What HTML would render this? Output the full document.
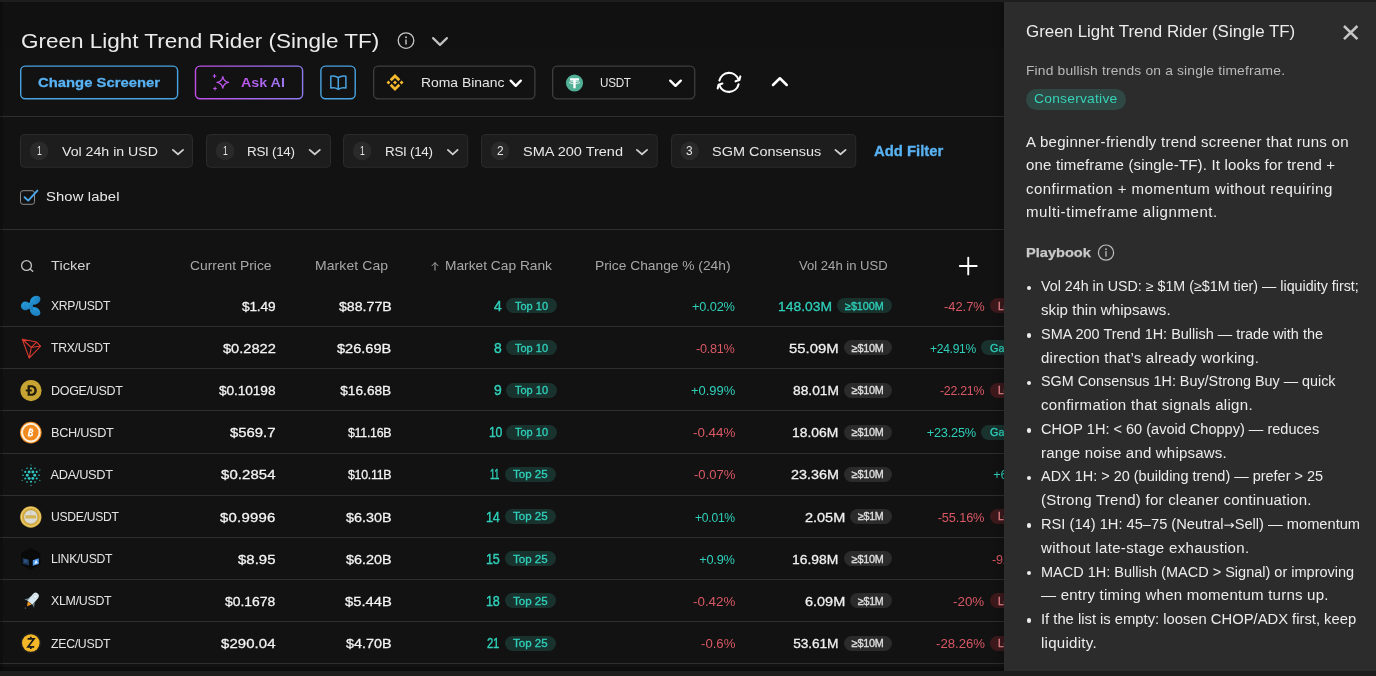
<!DOCTYPE html>
<html lang="en"><head><meta charset="utf-8"><title>Green Light Trend Rider (Single TF)</title>
<style>
html,body{margin:0;padding:0;background:#121212;}
body{width:1376px;height:676px;overflow:hidden;position:relative;font-family:"Liberation Sans", sans-serif;}
.layer{position:absolute;left:0;top:0;width:1376px;height:676px;overflow:hidden;will-change:transform}
ul,li,p,h3,header,nav{margin:0;padding:0;list-style:none;font:inherit;display:block}
.t{position:absolute;line-height:1;white-space:pre;transform-origin:0 0}
.ov{position:absolute;left:0;top:0}
.hl{position:absolute;left:0;width:1004px;height:1px;background:#2e2e2e}
.chip{position:absolute;border-radius:8px}
.dot{position:absolute;width:4.7px;height:4.7px;border-radius:50%;background:#ededed}
.topbar{position:absolute;left:0;top:0;width:1376px;height:2px;background:#1e1e1e}
.botbar{position:absolute;left:0;top:671px;width:1376px;height:5px;background:#1d1d1d}
.botdark{position:absolute;left:0;top:667px;width:1004px;height:4px;background:#0d0d0d}
.leftdark{position:absolute;left:0;top:2px;width:3px;height:669px;background:rgba(0,0,0,0.2)}
.topshade{position:absolute;left:0;top:2px;width:1004px;height:46px;background:rgba(0,0,0,0.05)}
.pbg{position:absolute;left:1004px;top:2px;width:372px;height:669px;background:#2c2c2c;box-shadow:-3px 0 8px rgba(0,0,0,0.22)}
.cons{position:absolute;left:1025.5px;top:88.8px;width:100px;height:21.3px;border-radius:11px;background:#2f4844}
</style></head>
<body>
<main class="layer main">
<div class="topshade"></div>
<div class="hl" style="top:116px"></div>
<div class="hl" style="top:229px"></div>
<svg class="ov" width="1376" height="676" viewBox="0 0 1376 676"><defs><linearGradient id="pg" x1="195" x2="303" y1="0" y2="0" gradientUnits="userSpaceOnUse"><stop offset="0" stop-color="#c24ee6"/><stop offset="1" stop-color="#8f7df0"/></linearGradient></defs><rect x="20.70" y="66.10" width="156.90" height="32.70" rx="4.5" fill="none" stroke="#4aa3df" stroke-width="1.4"/>
<rect x="195.50" y="66.10" width="107.10" height="32.70" rx="4.5" fill="none" stroke="url(#pg)" stroke-width="1.4"/>
<rect x="320.90" y="66.10" width="34.30" height="32.70" rx="4.5" fill="none" stroke="#4aa3df" stroke-width="1.4"/>
<rect x="373.65" y="66.05" width="161.20" height="32.80" rx="4.5" fill="none" stroke="#3e3e3e" stroke-width="1.3"/>
<rect x="552.65" y="66.05" width="142.10" height="32.80" rx="4.5" fill="none" stroke="#3e3e3e" stroke-width="1.3"/>
<rect x="20.50" y="134.50" width="172.00" height="32.80" rx="4" fill="#1d1d1d" stroke="#2b2b2b" stroke-width="1"/>
<circle cx="39.1" cy="150.9" r="9.3" fill="#2a2a2a"/>
<rect x="206.50" y="134.50" width="124.00" height="32.80" rx="4" fill="#1d1d1d" stroke="#2b2b2b" stroke-width="1"/>
<circle cx="225.1" cy="150.9" r="9.3" fill="#2a2a2a"/>
<rect x="343.50" y="134.50" width="124.25" height="32.80" rx="4" fill="#1d1d1d" stroke="#2b2b2b" stroke-width="1"/>
<circle cx="362.1" cy="150.9" r="9.3" fill="#2a2a2a"/>
<rect x="481.50" y="134.50" width="175.75" height="32.80" rx="4" fill="#1d1d1d" stroke="#2b2b2b" stroke-width="1"/>
<circle cx="500.1" cy="150.9" r="9.3" fill="#2a2a2a"/>
<rect x="671.50" y="134.50" width="184.25" height="32.80" rx="4" fill="#1d1d1d" stroke="#2b2b2b" stroke-width="1"/>
<circle cx="689.6" cy="150.9" r="9.3" fill="#2a2a2a"/>
<rect x="20.50" y="190.70" width="14.00" height="13.60" rx="2.5" fill="none" stroke="#8a8a8a" stroke-width="1"/></svg>
<div class="chip" style="left:506.25px;top:298.30px;width:50.25px;height:15px;background:#19322e"></div>
<div class="chip" style="left:836.75px;top:298.30px;width:55.25px;height:15px;background:#19322e"></div>
<div class="chip" style="left:989.5px;top:298.30px;width:50px;height:15px;background:#3d191c"></div>
<div class="hl" style="top:326.10px"></div>
<div class="chip" style="left:506.25px;top:340.47px;width:50.25px;height:15px;background:#19322e"></div>
<div class="chip" style="left:843.75px;top:340.47px;width:48.25px;height:15px;background:#2b2b2b"></div>
<div class="chip" style="left:981.25px;top:340.47px;width:50px;height:15px;background:#19322e"></div>
<div class="hl" style="top:368.27px"></div>
<div class="chip" style="left:506.25px;top:382.64px;width:50.25px;height:15px;background:#19322e"></div>
<div class="chip" style="left:843.75px;top:382.64px;width:48.25px;height:15px;background:#2b2b2b"></div>
<div class="chip" style="left:989.5px;top:382.64px;width:50px;height:15px;background:#3d191c"></div>
<div class="hl" style="top:410.44px"></div>
<div class="chip" style="left:506.25px;top:424.81px;width:50.25px;height:15px;background:#19322e"></div>
<div class="chip" style="left:843.75px;top:424.81px;width:48.25px;height:15px;background:#2b2b2b"></div>
<div class="chip" style="left:981.25px;top:424.81px;width:50px;height:15px;background:#19322e"></div>
<div class="hl" style="top:452.61px"></div>
<div class="chip" style="left:504.6px;top:466.98px;width:51.40px;height:15px;background:#19322e"></div>
<div class="chip" style="left:843.75px;top:466.98px;width:48.25px;height:15px;background:#2b2b2b"></div>
<div class="hl" style="top:494.78px"></div>
<div class="chip" style="left:504.6px;top:509.15px;width:51.40px;height:15px;background:#19322e"></div>
<div class="chip" style="left:850px;top:509.15px;width:42.00px;height:15px;background:#2b2b2b"></div>
<div class="chip" style="left:989.5px;top:509.15px;width:50px;height:15px;background:#3d191c"></div>
<div class="hl" style="top:536.95px"></div>
<div class="chip" style="left:504.6px;top:551.32px;width:51.40px;height:15px;background:#19322e"></div>
<div class="chip" style="left:843.75px;top:551.32px;width:48.25px;height:15px;background:#2b2b2b"></div>
<div class="hl" style="top:579.12px"></div>
<div class="chip" style="left:504.6px;top:593.49px;width:51.40px;height:15px;background:#19322e"></div>
<div class="chip" style="left:850px;top:593.49px;width:42.00px;height:15px;background:#2b2b2b"></div>
<div class="chip" style="left:989.5px;top:593.49px;width:50px;height:15px;background:#3d191c"></div>
<div class="hl" style="top:621.29px"></div>
<div class="chip" style="left:504.6px;top:635.66px;width:51.40px;height:15px;background:#19322e"></div>
<div class="chip" style="left:843.75px;top:635.66px;width:48.25px;height:15px;background:#2b2b2b"></div>
<div class="chip" style="left:989.5px;top:635.66px;width:50px;height:15px;background:#3d191c"></div>
<div class="hl" style="top:663.46px"></div>
<svg class="ov" width="1376" height="676" viewBox="0 0 1376 676"><circle cx="406" cy="40.6" r="7.8" fill="none" stroke="#c9c9c9" stroke-width="1.3"/><circle cx="406" cy="37.2" r="0.95" fill="#c9c9c9"/><path d="M406 39.9V44" stroke="#c9c9c9" stroke-width="1.4" stroke-linecap="round"/>
<path d="M433.10 38.10 L440.00 44.90 L446.90 38.10" fill="none" stroke="#bfbfbf" stroke-width="2.2" stroke-linecap="round" stroke-linejoin="round"/>
<path d="M222.8 76.6 C223.4 80.2 225 81.8 228.6 82.4 C225 83 223.4 84.6 222.8 88.2 C222.2 84.6 220.6 83 217 82.4 C220.6 81.8 222.2 80.2 222.8 76.6Z" fill="none" stroke="#bb55ec" stroke-width="1.3" stroke-linejoin="round"/>
<path d="M214.5 74.6V77.4M213.1 76H215.9M215 87.1V89.9M213.6 88.5H216.4" stroke="#bb55ec" stroke-width="1.1" stroke-linecap="round"/>
<path d="M338.3 77.6C336 76 333 75.7 330.8 76.2V88C333 87.5 336 87.8 338.3 89.3C340.6 87.8 343.6 87.5 345.9 88V76.2C343.6 75.7 340.6 76 338.3 77.6ZM338.3 77.6V89.3" fill="none" stroke="#4aa3df" stroke-width="1.5" stroke-linejoin="round"/>
<g transform="translate(386.5,74) scale(0.1355)" fill="#f3ba2f"><polygon points="62.76,0 101.65,38.9 87.35,53.2 62.76,28.6 38.17,53.2 23.86,38.9"/><polygon points="62.76,125.5 101.65,86.6 87.35,72.3 62.76,96.9 38.17,72.3 23.86,86.6"/><polygon points="0,62.76 14.3,48.45 28.6,62.76 14.3,77.07"/><polygon points="96.9,62.76 111.2,48.45 125.5,62.76 111.2,77.07"/><polygon points="62.76,48.23 77.28,62.76 62.76,77.28 48.23,62.76"/></g>
<path d="M510.70 80.70 L515.75 85.80 L520.80 80.70" fill="none" stroke="#ffffff" stroke-width="2.4" stroke-linecap="round" stroke-linejoin="round"/>
<circle cx="574.5" cy="83" r="8.6" fill="#50af95"/><path d="M570 78.3H579V80.6H575.7V88.3H573.3V80.6H570Z" fill="#fff"/><ellipse cx="574.5" cy="82.6" rx="5.2" ry="1.1" fill="none" stroke="#fff" stroke-width="0.7"/>
<path d="M670.20 80.70 L675.50 85.80 L680.80 80.70" fill="none" stroke="#ffffff" stroke-width="2.4" stroke-linecap="round" stroke-linejoin="round"/>
<g fill="none" stroke="#fff" stroke-width="2.1" stroke-linecap="round" stroke-linejoin="round"><path d="M719.4 80.6A10 10 0 0 1 738.5 79.4"/><path d="M735.6 81.3L739.4 80L740.3 76.4"/><path d="M738.6 84.2A10 10 0 0 1 719.5 85.4"/><path d="M722.4 83.5L718.6 84.8L717.7 88.4"/></g>
<path d="M773.00 85.00 L779.88 78.25 L786.75 85.00" fill="none" stroke="#ffffff" stroke-width="2.5" stroke-linecap="round" stroke-linejoin="round"/>
<path d="M172.90 149.90 L178.00 154.30 L183.10 149.90" fill="none" stroke="#cfcfcf" stroke-width="1.8" stroke-linecap="round" stroke-linejoin="round"/>
<path d="M309.65 149.90 L314.75 154.30 L319.85 149.90" fill="none" stroke="#cfcfcf" stroke-width="1.8" stroke-linecap="round" stroke-linejoin="round"/>
<path d="M447.90 149.90 L452.75 154.30 L457.60 149.90" fill="none" stroke="#cfcfcf" stroke-width="1.8" stroke-linecap="round" stroke-linejoin="round"/>
<path d="M636.90 149.90 L642.00 154.30 L647.10 149.90" fill="none" stroke="#cfcfcf" stroke-width="1.8" stroke-linecap="round" stroke-linejoin="round"/>
<path d="M835.40 149.90 L840.50 154.30 L845.60 149.90" fill="none" stroke="#cfcfcf" stroke-width="1.8" stroke-linecap="round" stroke-linejoin="round"/>
<path d="M24.6 197.2L28.2 200.6L37.4 190.6" fill="none" stroke="#4aa8ea" stroke-width="1.9" stroke-linecap="round" stroke-linejoin="round"/>
<circle cx="26.5" cy="265.5" r="4.9" fill="none" stroke="#c2c2c2" stroke-width="1.3"/><path d="M30.3 269.3L32.7 271.3" stroke="#c2c2c2" stroke-width="1.4" stroke-linecap="round"/>
<path d="M435 270.2V262.8M432 265.7L435 262.7L438 265.7" fill="none" stroke="#a8a8a8" stroke-width="1" stroke-linecap="round" stroke-linejoin="round"/>
<path d="M959.8 266H976.7M968.25 257.6V274.4" stroke="#fff" stroke-width="1.9" stroke-linecap="round"/>
<defs><linearGradient id="xg" x1="0" y1="0" x2="1" y2="1"><stop offset="0" stop-color="#27a2e0"/><stop offset="1" stop-color="#1b75b4"/></linearGradient></defs><g fill="url(#xg)"><circle cx="25.4" cy="305.9" r="4.4"/><ellipse cx="35.2" cy="300.29999999999995" rx="5.6" ry="4.1" transform="rotate(-32 35.2 300.29999999999995)"/><ellipse cx="35.2" cy="311.5" rx="5.6" ry="4.1" transform="rotate(32 35.2 311.5)"/><path d="M26 303.7L33 301.29999999999995L33 310.5L26 308.09999999999997Z"/></g>
<path d="M22.3 339.27L36.6 342.07L40.6 346.07L29.2 358.07ZM22.3 339.27L31.3 347.46999999999997L29.2 358.07M31.3 347.46999999999997L36.6 342.07M31.3 347.46999999999997L40.6 346.07" fill="none" stroke="#d9382c" stroke-width="1.1" stroke-linejoin="round"/>
<circle cx="31" cy="390.54" r="10.6" fill="#c8a533"/><path d="M27.6 385.24H31.2C35 385.24 36.8 387.64 36.8 390.54C36.8 393.44 35 395.84000000000003 31.2 395.84000000000003H27.6ZM29.9 387.24V393.84000000000003H31.1C33.4 393.84000000000003 34.4 392.24 34.4 390.54C34.4 388.84000000000003 33.4 387.24 31.1 387.24Z" fill="#221c0c" fill-rule="evenodd"/><rect x="25.8" y="389.54" width="6" height="1.9" fill="#221c0c"/>
<circle cx="30.8" cy="432.60999999999996" r="10.8" fill="#f08a1e"/><circle cx="30.8" cy="432.60999999999996" r="8.8" fill="none" stroke="#fff1dc" stroke-width="2"/><g transform="translate(30.8 432.60999999999996) rotate(14) scale(0.8) translate(-31.6 -432.40999999999997)"><path d="M28.6 428.01H31.8C33.6 428.01 34.4 429.01 34.4 430.10999999999996C34.4 431.10999999999996 33.8 431.80999999999995 33 432.10999999999996C34.2 432.40999999999997 35 433.30999999999995 35 434.51C35 436.01 33.9 437.01 32 437.01H28.6ZM30.7 429.60999999999996V431.40999999999997H31.5C32.2 431.40999999999997 32.5 431.01 32.5 430.51C32.5 429.90999999999997 32.2 429.60999999999996 31.5 429.60999999999996ZM30.7 433.01V435.40999999999997H31.7C32.5 435.40999999999997 32.9 434.90999999999997 32.9 434.21C32.9 433.51 32.5 433.01 31.7 433.01Z" fill="#fff" fill-rule="evenodd"/><path d="M30.2 426.60999999999996V428.40999999999997M32 426.60999999999996V428.40999999999997M30.2 436.60999999999996V438.40999999999997M32 436.60999999999996V438.40999999999997" stroke="#fff" stroke-width="0.9"/></g>
<g fill="#2fc6c2"><circle cx="34.70" cy="475.18" r="1.45"/><circle cx="32.85" cy="478.38" r="1.45"/><circle cx="29.15" cy="478.38" r="1.45"/><circle cx="27.30" cy="475.18" r="1.45"/><circle cx="29.15" cy="471.98" r="1.45"/><circle cx="32.85" cy="471.98" r="1.45"/><circle cx="36.72" cy="478.48" r="1.05"/><circle cx="31.00" cy="481.78" r="1.05"/><circle cx="25.28" cy="478.48" r="1.05"/><circle cx="25.28" cy="471.88" r="1.05"/><circle cx="31.00" cy="468.58" r="1.05"/><circle cx="36.72" cy="471.88" r="1.05"/><circle cx="39.00" cy="475.18" r="0.8"/><circle cx="35.00" cy="482.11" r="0.8"/><circle cx="27.00" cy="482.11" r="0.8"/><circle cx="23.00" cy="475.18" r="0.8"/><circle cx="27.00" cy="468.25" r="0.8"/><circle cx="35.00" cy="468.25" r="0.8"/><circle cx="39.83" cy="480.28" r="0.6"/><circle cx="31.00" cy="485.38" r="0.6"/><circle cx="22.17" cy="480.28" r="0.6"/><circle cx="22.17" cy="470.08" r="0.6"/><circle cx="31.00" cy="464.98" r="0.6"/><circle cx="39.83" cy="470.08" r="0.6"/></g>
<circle cx="30.8" cy="516.95" r="10.7" fill="#d8b040"/><circle cx="30.8" cy="516.95" r="9.5" fill="none" stroke="#edd27e" stroke-width="1"/><circle cx="30.8" cy="516.95" r="7" fill="#dadad6"/><circle cx="30.8" cy="516.95" r="7.2" fill="none" stroke="#c49a33" stroke-width="0.7"/><rect x="25.4" y="515.25" width="10.8" height="3.3" rx="0.6" fill="#d4b355"/><path d="M30.8 511.25V514.55" stroke="#c9c2a4" stroke-width="0.8"/>
<path d="M30.7 547.92L40.4 553.3199999999999V564.3199999999999L30.7 569.92L21 564.3199999999999V553.3199999999999Z" fill="#090909"/><path d="M22.7 558.12L29 559.7199999999999V565.52L22.7 563.7199999999999Z" fill="#1d3558"/><path d="M24 560.12H27.6M24 561.92H27.6" stroke="#4272ad" stroke-width="0.7"/><path d="M32.8 560.2199999999999L38.8 558.3199999999999V564.02L32.8 565.7199999999999Z" fill="#4f9bf0"/><path d="M34.4 563.92L36 559.7199999999999L37.8 563.12Z" fill="#e4f1ff"/>
<g transform="rotate(40 32.6 599.49)"><path d="M29.3 603.69V595.29A3.3 3.6 0 0 1 35.9 595.29V603.69Z" fill="#d7e8f0"/><path d="M29.3 603.69V598.49" stroke="#b3c9d4" stroke-width="0.8"/><circle cx="32.6" cy="595.69" r="1.7" fill="#fff" stroke="#9db4c0" stroke-width="0.5"/><path d="M29.3 599.89L26.2 604.89L29.3 603.49ZM35.9 599.89L39 604.89L35.9 603.49Z" fill="#6f8792"/><path d="M30.2 603.89H35L32.6 608.29Z" fill="#f19a22"/><circle cx="32.6" cy="610.69" r="0.8" fill="#555"/></g>
<circle cx="30.8" cy="642.96" r="10.5" fill="#1d1d1d"/><circle cx="30.8" cy="642.96" r="8.8" fill="#f4b728"/><path d="M27.6 638.86H34L28 646.86H34.2M30.8 636.86V638.86M30.8 646.86V649.06" fill="none" stroke="#1a1a1a" stroke-width="1.7" stroke-linejoin="miter"/></svg>
<header class="toolbar">
<span class="t" style="left:20.75px;top:31.00px;font-size:20.8px;letter-spacing:0.000px;color:#ebebeb;transform:scaleX(1.0812);">Green Light Trend Rider (Single TF)</span>
<span class="t" style="left:38.00px;top:76.00px;font-size:13.6px;letter-spacing:0.007px;color:#58b2f3;font-weight:700;transform:scaleX(1.0900);-webkit-text-stroke:0.3px #58b2f3;">Change Screener</span>
<span class="t" style="left:241.20px;top:76.00px;font-size:13.6px;letter-spacing:0.000px;color:#b05cf0;font-weight:700;transform:scaleX(1.0499);background:linear-gradient(90deg,#bf55ee,#9b78f0);-webkit-background-clip:text;background-clip:text;color:transparent;">Ask AI</span>
<span class="t" style="left:420.50px;top:77.00px;font-size:12.9px;letter-spacing:0.000px;color:#e6e6e6;transform:scaleX(1.0789);">Roma Binanc</span>
<span class="t" style="left:599.80px;top:77.00px;font-size:12.7px;letter-spacing:-0.300px;color:#e6e6e6;transform:scaleX(0.9213);">USDT</span>
</header>
<nav class="filters">
<span class="t" style="left:62.00px;top:145.00px;font-size:13.6px;letter-spacing:0.000px;color:#e8e8e8;transform:scaleX(1.0412);">Vol 24h in USD</span>
<span class="t" style="left:247.00px;top:145.00px;font-size:13.6px;letter-spacing:-0.300px;color:#e8e8e8;transform:scaleX(0.9892);">RSI (14)</span>
<span class="t" style="left:384.75px;top:145.00px;font-size:13.6px;letter-spacing:-0.300px;color:#e8e8e8;transform:scaleX(0.9892);">RSI (14)</span>
<span class="t" style="left:522.50px;top:145.00px;font-size:13.6px;letter-spacing:0.000px;color:#e8e8e8;transform:scaleX(1.0672);">SMA 200 Trend</span>
<span class="t" style="left:712.00px;top:145.00px;font-size:13.6px;letter-spacing:0.000px;color:#e8e8e8;transform:scaleX(1.0633);">SGM Consensus</span>
<span class="t" style="left:873.75px;top:145.00px;font-size:13.9px;letter-spacing:0.000px;color:#58b2f3;font-weight:700;transform:scaleX(1.0682);-webkit-text-stroke:0.3px #58b2f3;">Add Filter</span>
<span class="t" style="left:46.00px;top:190.00px;font-size:13.6px;letter-spacing:0.102px;color:#e8e8e8;transform:scaleX(1.0900);">Show label</span>
<span class="t" style="left:36.70px;top:145.00px;font-size:12.6px;letter-spacing:-0.300px;color:#e6e6e6;transform:scaleX(0.6842);">1</span>
<span class="t" style="left:222.70px;top:145.00px;font-size:12.6px;letter-spacing:-0.300px;color:#e6e6e6;transform:scaleX(0.6842);">1</span>
<span class="t" style="left:359.70px;top:145.00px;font-size:12.6px;letter-spacing:-0.300px;color:#e6e6e6;transform:scaleX(0.6842);">1</span>
<span class="t" style="left:496.80px;top:145.00px;font-size:12.6px;letter-spacing:-0.300px;color:#e6e6e6;transform:scaleX(0.9408);">2</span>
<span class="t" style="left:686.30px;top:145.00px;font-size:12.6px;letter-spacing:-0.300px;color:#e6e6e6;transform:scaleX(0.9408);">3</span>
</nav>
<div class="thead" role="row">
<span class="t" style="left:51.25px;top:259.00px;font-size:13.6px;letter-spacing:0.000px;color:#d2d2d2;transform:scaleX(1.0753);">Ticker</span>
<span class="t" style="left:190.00px;top:260.00px;font-size:12.8px;letter-spacing:0.000px;color:#a8a8a8;transform:scaleX(1.0810);">Current Price</span>
<span class="t" style="left:314.50px;top:260.00px;font-size:12.8px;letter-spacing:0.092px;color:#a8a8a8;transform:scaleX(1.0900);">Market Cap</span>
<span class="t" style="left:445.00px;top:260.00px;font-size:12.8px;letter-spacing:0.000px;color:#a8a8a8;transform:scaleX(1.0745);">Market Cap Rank</span>
<span class="t" style="left:594.50px;top:260.00px;font-size:12.8px;letter-spacing:0.000px;color:#a8a8a8;transform:scaleX(1.0762);">Price Change % (24h)</span>
<span class="t" style="left:799.25px;top:260.00px;font-size:12.8px;letter-spacing:0.000px;color:#a8a8a8;transform:scaleX(1.0225);">Vol 24h in USD</span>
</div>
<div class="tbody" role="rowgroup">
<div class="tr" role="row">
<span class="t" style="left:50.50px;top:300.00px;font-size:12.8px;letter-spacing:-0.300px;color:#e4e4e4;transform:scaleX(0.9504);">XRP/USDT</span>
<span class="t" style="left:242.00px;top:300.00px;font-size:13.7px;letter-spacing:-0.191px;color:#f4f4f4;-webkit-text-stroke:0.28px #f4f4f4;">$1.49</span>
<span class="t" style="left:338.50px;top:300.00px;font-size:13.7px;letter-spacing:-0.000px;color:#f4f4f4;transform:scaleX(1.0343);-webkit-text-stroke:0.28px #f4f4f4;">$88.77B</span>
<span class="t" style="left:494.25px;top:300.00px;font-size:13.9px;letter-spacing:0.000px;color:#2fd0ba;transform:scaleX(1.0020);-webkit-text-stroke:0.4px #2fd0ba;">4</span>
<span class="t" style="left:515.00px;top:301.00px;font-size:10.8px;letter-spacing:0.000px;color:#2fd0ba;transform:scaleX(1.0178);-webkit-text-stroke:0.32px #2fd0ba;">Top 10</span>
<span class="t" style="left:692.00px;top:301.00px;font-size:12.8px;letter-spacing:-0.153px;color:#2fd0ba;">+0.02%</span>
<span class="t" style="left:777.50px;top:300.00px;font-size:13.7px;letter-spacing:0.000px;color:#2fd0ba;transform:scaleX(1.0135);-webkit-text-stroke:0.3px #2fd0ba;">148.03M</span>
<span class="t" style="left:845.00px;top:301.00px;font-size:10.8px;letter-spacing:-0.041px;color:#2fd0ba;-webkit-text-stroke:0.32px #2fd0ba;">≥$100M</span>
<span class="t" style="left:943.75px;top:301.00px;font-size:12.8px;letter-spacing:-0.000px;color:#d95865;transform:scaleX(1.0050);">-42.7%</span>
<span class="t" style="left:998.00px;top:301.00px;font-size:10.8px;letter-spacing:-0.300px;color:#ee8a90;transform:scaleX(0.9584);-webkit-text-stroke:0.32px #ee8a90;">Loss</span>
</div>
<div class="tr" role="row">
<span class="t" style="left:50.50px;top:342.00px;font-size:12.8px;letter-spacing:-0.300px;color:#e4e4e4;transform:scaleX(0.9564);">TRX/USDT</span>
<span class="t" style="left:222.70px;top:342.00px;font-size:13.7px;letter-spacing:0.000px;color:#f4f4f4;transform:scaleX(1.0670);-webkit-text-stroke:0.28px #f4f4f4;">$0.2822</span>
<span class="t" style="left:337.00px;top:342.00px;font-size:13.7px;letter-spacing:0.000px;color:#f4f4f4;transform:scaleX(1.0637);-webkit-text-stroke:0.28px #f4f4f4;">$26.69B</span>
<span class="t" style="left:494.25px;top:342.00px;font-size:13.9px;letter-spacing:0.000px;color:#2fd0ba;transform:scaleX(1.0020);-webkit-text-stroke:0.4px #2fd0ba;">8</span>
<span class="t" style="left:515.00px;top:343.00px;font-size:10.8px;letter-spacing:0.000px;color:#2fd0ba;transform:scaleX(1.0178);-webkit-text-stroke:0.32px #2fd0ba;">Top 10</span>
<span class="t" style="left:696.25px;top:343.00px;font-size:12.8px;letter-spacing:-0.300px;color:#d95865;transform:scaleX(0.9924);">-0.81%</span>
<span class="t" style="left:789.00px;top:342.00px;font-size:13.7px;letter-spacing:0.000px;color:#f0f0f0;transform:scaleX(1.0842);-webkit-text-stroke:0.3px #f0f0f0;">55.09M</span>
<span class="t" style="left:851.75px;top:343.00px;font-size:10.8px;letter-spacing:-0.234px;color:#e0e0e0;-webkit-text-stroke:0.32px #e0e0e0;">≥$10M</span>
<span class="t" style="left:930.00px;top:343.00px;font-size:12.8px;letter-spacing:-0.300px;color:#2fd0ba;transform:scaleX(0.9421);">+24.91%</span>
<span class="t" style="left:990.00px;top:343.00px;font-size:10.8px;letter-spacing:0.000px;color:#2fd0ba;transform:scaleX(1.0082);-webkit-text-stroke:0.32px #2fd0ba;">Gain</span>
</div>
<div class="tr" role="row">
<span class="t" style="left:50.50px;top:385.00px;font-size:12.8px;letter-spacing:-0.300px;color:#e4e4e4;transform:scaleX(0.9772);">DOGE/USDT</span>
<span class="t" style="left:219.00px;top:384.00px;font-size:13.7px;letter-spacing:-0.085px;color:#f4f4f4;-webkit-text-stroke:0.28px #f4f4f4;">$0.10198</span>
<span class="t" style="left:340.25px;top:384.00px;font-size:13.7px;letter-spacing:0.000px;color:#f4f4f4;-webkit-text-stroke:0.28px #f4f4f4;">$16.68B</span>
<span class="t" style="left:494.25px;top:384.00px;font-size:13.9px;letter-spacing:0.000px;color:#2fd0ba;transform:scaleX(1.0020);-webkit-text-stroke:0.4px #2fd0ba;">9</span>
<span class="t" style="left:515.00px;top:385.00px;font-size:10.8px;letter-spacing:0.000px;color:#2fd0ba;transform:scaleX(1.0178);-webkit-text-stroke:0.32px #2fd0ba;">Top 10</span>
<span class="t" style="left:690.75px;top:385.00px;font-size:12.8px;letter-spacing:0.000px;color:#2fd0ba;transform:scaleX(1.0111);">+0.99%</span>
<span class="t" style="left:792.50px;top:384.00px;font-size:13.7px;letter-spacing:0.000px;color:#f0f0f0;transform:scaleX(1.0075);-webkit-text-stroke:0.3px #f0f0f0;">88.01M</span>
<span class="t" style="left:851.75px;top:385.00px;font-size:10.8px;letter-spacing:-0.234px;color:#e0e0e0;-webkit-text-stroke:0.32px #e0e0e0;">≥$10M</span>
<span class="t" style="left:940.00px;top:385.00px;font-size:12.8px;letter-spacing:-0.300px;color:#d95865;transform:scaleX(0.9701);">-22.21%</span>
<span class="t" style="left:998.00px;top:385.00px;font-size:10.8px;letter-spacing:-0.300px;color:#ee8a90;transform:scaleX(0.9584);-webkit-text-stroke:0.32px #ee8a90;">Loss</span>
</div>
<div class="tr" role="row">
<span class="t" style="left:50.50px;top:427.00px;font-size:12.8px;letter-spacing:-0.300px;color:#e4e4e4;transform:scaleX(0.9933);">BCH/USDT</span>
<span class="t" style="left:230.00px;top:426.00px;font-size:13.7px;letter-spacing:0.000px;color:#f4f4f4;transform:scaleX(1.0866);-webkit-text-stroke:0.28px #f4f4f4;">$569.7</span>
<span class="t" style="left:347.70px;top:426.00px;font-size:13.7px;letter-spacing:-0.300px;color:#f4f4f4;transform:scaleX(0.9038);-webkit-text-stroke:0.28px #f4f4f4;">$11.16B</span>
<span class="t" style="left:488.70px;top:426.00px;font-size:13.9px;letter-spacing:-0.300px;color:#2fd0ba;transform:scaleX(0.8777);-webkit-text-stroke:0.4px #2fd0ba;">10</span>
<span class="t" style="left:515.00px;top:427.00px;font-size:10.8px;letter-spacing:0.000px;color:#2fd0ba;transform:scaleX(1.0178);-webkit-text-stroke:0.32px #2fd0ba;">Top 10</span>
<span class="t" style="left:692.60px;top:427.00px;font-size:12.8px;letter-spacing:0.000px;color:#d95865;transform:scaleX(1.0457);">-0.44%</span>
<span class="t" style="left:792.30px;top:426.00px;font-size:13.7px;letter-spacing:-0.000px;color:#f0f0f0;transform:scaleX(1.0119);-webkit-text-stroke:0.3px #f0f0f0;">18.06M</span>
<span class="t" style="left:851.75px;top:427.00px;font-size:10.8px;letter-spacing:-0.234px;color:#e0e0e0;-webkit-text-stroke:0.32px #e0e0e0;">≥$10M</span>
<span class="t" style="left:926.70px;top:427.00px;font-size:12.8px;letter-spacing:-0.223px;color:#2fd0ba;">+23.25%</span>
<span class="t" style="left:990.00px;top:427.00px;font-size:10.8px;letter-spacing:0.000px;color:#2fd0ba;transform:scaleX(1.0082);-webkit-text-stroke:0.32px #2fd0ba;">Gain</span>
</div>
<div class="tr" role="row">
<span class="t" style="left:50.50px;top:469.00px;font-size:12.8px;letter-spacing:-0.300px;color:#e4e4e4;">ADA/USDT</span>
<span class="t" style="left:221.00px;top:468.00px;font-size:13.7px;letter-spacing:0.086px;color:#f4f4f4;transform:scaleX(1.0900);-webkit-text-stroke:0.28px #f4f4f4;">$0.2854</span>
<span class="t" style="left:347.70px;top:468.00px;font-size:13.7px;letter-spacing:-0.300px;color:#f4f4f4;transform:scaleX(0.9038);-webkit-text-stroke:0.28px #f4f4f4;">$10.11B</span>
<span class="t" style="left:490.40px;top:468.00px;font-size:13.9px;letter-spacing:-0.300px;color:#2fd0ba;transform:scaleX(0.6586);-webkit-text-stroke:0.4px #2fd0ba;">11</span>
<span class="t" style="left:513.00px;top:469.00px;font-size:10.8px;letter-spacing:0.000px;color:#2fd0ba;transform:scaleX(1.0672);-webkit-text-stroke:0.32px #2fd0ba;">Top 25</span>
<span class="t" style="left:693.50px;top:469.00px;font-size:12.8px;letter-spacing:0.000px;color:#d95865;transform:scaleX(1.0235);">-0.07%</span>
<span class="t" style="left:790.60px;top:468.00px;font-size:13.7px;letter-spacing:0.000px;color:#f0f0f0;transform:scaleX(1.0491);-webkit-text-stroke:0.3px #f0f0f0;">23.36M</span>
<span class="t" style="left:851.75px;top:469.00px;font-size:10.8px;letter-spacing:-0.234px;color:#e0e0e0;-webkit-text-stroke:0.32px #e0e0e0;">≥$10M</span>
<span class="t" style="left:993.20px;top:469.00px;font-size:12.8px;letter-spacing:-0.193px;color:#2fd0ba;">+6.18%</span>
</div>
<div class="tr" role="row">
<span class="t" style="left:50.50px;top:511.00px;font-size:12.8px;letter-spacing:-0.300px;color:#e4e4e4;transform:scaleX(0.9503);">USDE/USDT</span>
<span class="t" style="left:220.20px;top:511.00px;font-size:13.7px;letter-spacing:0.208px;color:#f4f4f4;transform:scaleX(1.0900);-webkit-text-stroke:0.28px #f4f4f4;">$0.9996</span>
<span class="t" style="left:345.60px;top:511.00px;font-size:13.7px;letter-spacing:0.000px;color:#f4f4f4;transform:scaleX(1.0521);-webkit-text-stroke:0.28px #f4f4f4;">$6.30B</span>
<span class="t" style="left:486.00px;top:511.00px;font-size:13.9px;letter-spacing:-0.300px;color:#2fd0ba;transform:scaleX(0.9041);-webkit-text-stroke:0.4px #2fd0ba;">14</span>
<span class="t" style="left:513.00px;top:511.00px;font-size:10.8px;letter-spacing:0.000px;color:#2fd0ba;transform:scaleX(1.0672);-webkit-text-stroke:0.32px #2fd0ba;">Top 25</span>
<span class="t" style="left:694.80px;top:512.00px;font-size:12.8px;letter-spacing:-0.300px;color:#2fd0ba;transform:scaleX(0.9511);">+0.01%</span>
<span class="t" style="left:804.80px;top:511.00px;font-size:13.7px;letter-spacing:0.000px;color:#f0f0f0;transform:scaleX(1.0566);-webkit-text-stroke:0.3px #f0f0f0;">2.05M</span>
<span class="t" style="left:858.00px;top:511.00px;font-size:10.8px;letter-spacing:-0.300px;color:#e0e0e0;transform:scaleX(0.9890);-webkit-text-stroke:0.32px #e0e0e0;">≥$1M</span>
<span class="t" style="left:937.70px;top:512.00px;font-size:12.8px;letter-spacing:-0.145px;color:#d95865;">-55.16%</span>
<span class="t" style="left:998.00px;top:511.00px;font-size:10.8px;letter-spacing:-0.300px;color:#ee8a90;transform:scaleX(0.9584);-webkit-text-stroke:0.32px #ee8a90;">Loss</span>
</div>
<div class="tr" role="row">
<span class="t" style="left:50.50px;top:553.00px;font-size:12.8px;letter-spacing:-0.300px;color:#e4e4e4;transform:scaleX(0.9543);">LINK/USDT</span>
<span class="t" style="left:238.00px;top:553.00px;font-size:13.7px;letter-spacing:0.035px;color:#f4f4f4;transform:scaleX(1.0900);-webkit-text-stroke:0.28px #f4f4f4;">$8.95</span>
<span class="t" style="left:345.60px;top:553.00px;font-size:13.7px;letter-spacing:0.000px;color:#f4f4f4;transform:scaleX(1.0521);-webkit-text-stroke:0.28px #f4f4f4;">$6.20B</span>
<span class="t" style="left:486.00px;top:553.00px;font-size:13.9px;letter-spacing:-0.300px;color:#2fd0ba;transform:scaleX(0.9041);-webkit-text-stroke:0.4px #2fd0ba;">15</span>
<span class="t" style="left:513.00px;top:554.00px;font-size:10.8px;letter-spacing:0.000px;color:#2fd0ba;transform:scaleX(1.0672);-webkit-text-stroke:0.32px #2fd0ba;">Top 25</span>
<span class="t" style="left:699.20px;top:554.00px;font-size:12.8px;letter-spacing:-0.214px;color:#2fd0ba;">+0.9%</span>
<span class="t" style="left:792.30px;top:553.00px;font-size:13.7px;letter-spacing:-0.000px;color:#f0f0f0;transform:scaleX(1.0119);-webkit-text-stroke:0.3px #f0f0f0;">16.98M</span>
<span class="t" style="left:851.75px;top:554.00px;font-size:10.8px;letter-spacing:-0.234px;color:#e0e0e0;-webkit-text-stroke:0.32px #e0e0e0;">≥$10M</span>
<span class="t" style="left:991.80px;top:554.00px;font-size:12.8px;letter-spacing:-0.300px;color:#d95865;transform:scaleX(0.9783);">-9.34%</span>
</div>
<div class="tr" role="row">
<span class="t" style="left:50.50px;top:595.00px;font-size:12.8px;letter-spacing:-0.300px;color:#e4e4e4;transform:scaleX(0.9696);">XLM/USDT</span>
<span class="t" style="left:225.30px;top:595.00px;font-size:13.7px;letter-spacing:-0.000px;color:#f4f4f4;transform:scaleX(1.0145);-webkit-text-stroke:0.28px #f4f4f4;">$0.1678</span>
<span class="t" style="left:344.50px;top:595.00px;font-size:13.7px;letter-spacing:0.000px;color:#f4f4f4;transform:scaleX(1.0774);-webkit-text-stroke:0.28px #f4f4f4;">$5.44B</span>
<span class="t" style="left:486.00px;top:595.00px;font-size:13.9px;letter-spacing:-0.300px;color:#2fd0ba;transform:scaleX(0.9041);-webkit-text-stroke:0.4px #2fd0ba;">18</span>
<span class="t" style="left:513.00px;top:596.00px;font-size:10.8px;letter-spacing:0.000px;color:#2fd0ba;transform:scaleX(1.0672);-webkit-text-stroke:0.32px #2fd0ba;">Top 25</span>
<span class="t" style="left:692.60px;top:596.00px;font-size:12.8px;letter-spacing:0.000px;color:#d95865;transform:scaleX(1.0457);">-0.42%</span>
<span class="t" style="left:804.80px;top:595.00px;font-size:13.7px;letter-spacing:0.000px;color:#f0f0f0;transform:scaleX(1.0566);-webkit-text-stroke:0.3px #f0f0f0;">6.09M</span>
<span class="t" style="left:858.00px;top:596.00px;font-size:10.8px;letter-spacing:-0.300px;color:#e0e0e0;transform:scaleX(0.9890);-webkit-text-stroke:0.32px #e0e0e0;">≥$1M</span>
<span class="t" style="left:953.30px;top:596.00px;font-size:12.8px;letter-spacing:0.000px;color:#d95865;transform:scaleX(1.0444);">-20%</span>
<span class="t" style="left:998.00px;top:596.00px;font-size:10.8px;letter-spacing:-0.300px;color:#ee8a90;transform:scaleX(0.9584);-webkit-text-stroke:0.32px #ee8a90;">Loss</span>
</div>
<div class="tr" role="row">
<span class="t" style="left:50.50px;top:638.00px;font-size:12.8px;letter-spacing:-0.300px;color:#e4e4e4;transform:scaleX(0.9612);">ZEC/USDT</span>
<span class="t" style="left:221.00px;top:637.00px;font-size:13.7px;letter-spacing:0.086px;color:#f4f4f4;transform:scaleX(1.0900);-webkit-text-stroke:0.28px #f4f4f4;">$290.04</span>
<span class="t" style="left:345.60px;top:637.00px;font-size:13.7px;letter-spacing:0.000px;color:#f4f4f4;transform:scaleX(1.0521);-webkit-text-stroke:0.28px #f4f4f4;">$4.70B</span>
<span class="t" style="left:487.30px;top:637.00px;font-size:13.9px;letter-spacing:-0.300px;color:#2fd0ba;transform:scaleX(0.8183);-webkit-text-stroke:0.4px #2fd0ba;">21</span>
<span class="t" style="left:513.00px;top:638.00px;font-size:10.8px;letter-spacing:0.000px;color:#2fd0ba;transform:scaleX(1.0672);-webkit-text-stroke:0.32px #2fd0ba;">Top 25</span>
<span class="t" style="left:700.60px;top:638.00px;font-size:12.8px;letter-spacing:0.000px;color:#d95865;transform:scaleX(1.0288);">-0.6%</span>
<span class="t" style="left:793.20px;top:637.00px;font-size:13.7px;letter-spacing:-0.071px;color:#f0f0f0;-webkit-text-stroke:0.3px #f0f0f0;">53.61M</span>
<span class="t" style="left:851.75px;top:638.00px;font-size:10.8px;letter-spacing:-0.234px;color:#e0e0e0;-webkit-text-stroke:0.32px #e0e0e0;">≥$10M</span>
<span class="t" style="left:935.50px;top:638.00px;font-size:12.8px;letter-spacing:-0.000px;color:#d95865;transform:scaleX(1.0279);">-28.26%</span>
<span class="t" style="left:998.00px;top:638.00px;font-size:10.8px;letter-spacing:-0.300px;color:#ee8a90;transform:scaleX(0.9584);-webkit-text-stroke:0.32px #ee8a90;">Loss</span>
</div>
</div>
<div class="botdark"></div><div class="leftdark"></div>
</main>
<aside class="layer panel">
<div class="pbg"></div>
<div class="cons"></div>
<div class="dot" style="left:1026.55px;top:285.65px"></div>
<div class="dot" style="left:1026.55px;top:333.17px"></div>
<div class="dot" style="left:1026.55px;top:380.69px"></div>
<div class="dot" style="left:1026.55px;top:428.21px"></div>
<div class="dot" style="left:1026.55px;top:475.73px"></div>
<div class="dot" style="left:1026.55px;top:523.25px"></div>
<div class="dot" style="left:1026.55px;top:570.77px"></div>
<div class="dot" style="left:1026.55px;top:618.29px"></div>
<svg class="ov" width="1376" height="676" viewBox="0 0 1376 676"><path d="M1344 26L1357.4 39.2M1357.4 26L1344 39.2" stroke="#c6c6c6" stroke-width="2.5" stroke-linecap="butt"/>
<circle cx="1106" cy="252.6" r="7.6" fill="none" stroke="#bdbdbd" stroke-width="1.2"/><circle cx="1106" cy="249.2" r="0.9" fill="#bdbdbd"/><path d="M1106 251.6V256.2" stroke="#bdbdbd" stroke-width="1.3" stroke-linecap="round"/></svg>
<header class="panel-head">
<span class="t" style="left:1025.50px;top:24.00px;font-size:15.7px;letter-spacing:0.000px;color:#ececec;transform:scaleX(1.0772);">Green Light Trend Rider (Single TF)</span>
<span class="t" style="left:1025.50px;top:65.00px;font-size:12.7px;letter-spacing:0.154px;color:#b9b9b9;transform:scaleX(1.0900);">Find bullish trends on a single timeframe.</span>
<span class="t" style="left:1034.00px;top:93.00px;font-size:12.7px;letter-spacing:0.212px;color:#36d1b7;transform:scaleX(1.0900);">Conservative</span>
</header>
<p class="desc">
<span class="t" style="left:1025.70px;top:136.00px;font-size:13.8px;letter-spacing:0.248px;color:#ececec;transform:scaleX(1.0900);">A beginner-friendly trend screener that runs on</span>
<span class="t" style="left:1025.70px;top:159.00px;font-size:13.8px;letter-spacing:0.139px;color:#ececec;transform:scaleX(1.0900);">one timeframe (single-TF). It looks for trend +</span>
<span class="t" style="left:1025.70px;top:183.00px;font-size:13.8px;letter-spacing:0.401px;color:#ececec;transform:scaleX(1.0900);">confirmation + momentum without requiring</span>
<span class="t" style="left:1025.70px;top:206.00px;font-size:13.8px;letter-spacing:0.518px;color:#ececec;transform:scaleX(1.0900);">multi-timeframe alignment.</span>
</p>
<h3 class="playbook">
<span class="t" style="left:1025.70px;top:246.00px;font-size:13.6px;letter-spacing:0.000px;color:#c9c9c9;font-weight:700;transform:scaleX(1.0738);-webkit-text-stroke:0.25px #c9c9c9;">Playbook</span>
</h3>
<ul class="bullets">
<li>
<span class="t" style="left:1041.40px;top:280.00px;font-size:13.8px;letter-spacing:0.000px;color:#ececec;transform:scaleX(1.0342);">Vol 24h in USD: ≥ $1M (≥$1M tier) — liquidity first;</span>
<span class="t" style="left:1041.40px;top:304.00px;font-size:13.8px;letter-spacing:0.045px;color:#ececec;transform:scaleX(1.0900);">skip thin whipsaws.</span>
</li>
<li>
<span class="t" style="left:1041.40px;top:328.00px;font-size:13.8px;letter-spacing:0.000px;color:#ececec;transform:scaleX(1.0476);">SMA 200 Trend 1H: Bullish — trade with the</span>
<span class="t" style="left:1041.40px;top:352.00px;font-size:13.8px;letter-spacing:0.215px;color:#ececec;transform:scaleX(1.0900);">direction that’s already working.</span>
</li>
<li>
<span class="t" style="left:1041.40px;top:375.00px;font-size:13.8px;letter-spacing:0.000px;color:#ececec;transform:scaleX(1.0408);">SGM Consensus 1H: Buy/Strong Buy — quick</span>
<span class="t" style="left:1041.40px;top:399.00px;font-size:13.8px;letter-spacing:0.275px;color:#ececec;transform:scaleX(1.0900);">confirmation that signals align.</span>
</li>
<li>
<span class="t" style="left:1041.40px;top:423.00px;font-size:13.8px;letter-spacing:0.000px;color:#ececec;transform:scaleX(1.0540);">CHOP 1H: &lt; 60 (avoid Choppy) — reduces</span>
<span class="t" style="left:1041.40px;top:447.00px;font-size:13.8px;letter-spacing:0.160px;color:#ececec;transform:scaleX(1.0900);">range noise and whipsaws.</span>
</li>
<li>
<span class="t" style="left:1041.40px;top:470.00px;font-size:13.8px;letter-spacing:0.000px;color:#ececec;transform:scaleX(1.0476);">ADX 1H: &gt; 20 (building trend) — prefer &gt; 25</span>
<span class="t" style="left:1041.40px;top:494.00px;font-size:13.8px;letter-spacing:0.206px;color:#ececec;transform:scaleX(1.0900);">(Strong Trend) for cleaner continuation.</span>
</li>
<li>
<span class="t" style="left:1041.40px;top:518.00px;font-size:13.8px;letter-spacing:0.000px;color:#ececec;transform:scaleX(1.0624);">RSI (14) 1H: 45–75 (Neutral<b style="font:400 12.5px/0 DejaVu Sans,sans-serif;position:relative;top:-0.5px">→</b>Sell) — momentum</span>
<span class="t" style="left:1041.40px;top:542.00px;font-size:13.8px;letter-spacing:0.289px;color:#ececec;transform:scaleX(1.0900);">without late-stage exhaustion.</span>
</li>
<li>
<span class="t" style="left:1041.40px;top:566.00px;font-size:13.8px;letter-spacing:-0.000px;color:#ececec;transform:scaleX(1.0514);">MACD 1H: Bullish (MACD &gt; Signal) or improving</span>
<span class="t" style="left:1041.40px;top:589.00px;font-size:13.8px;letter-spacing:0.206px;color:#ececec;transform:scaleX(1.0900);">— entry timing when momentum turns up.</span>
</li>
<li>
<span class="t" style="left:1041.40px;top:613.00px;font-size:13.8px;letter-spacing:0.000px;color:#ececec;transform:scaleX(1.0702);">If the list is empty: loosen CHOP/ADX first, keep</span>
<span class="t" style="left:1041.40px;top:637.00px;font-size:13.8px;letter-spacing:0.242px;color:#ececec;transform:scaleX(1.0900);">liquidity.</span>
</li>
</ul>
</aside>
<div class="topbar"></div><div class="botbar"></div>
</body></html>
